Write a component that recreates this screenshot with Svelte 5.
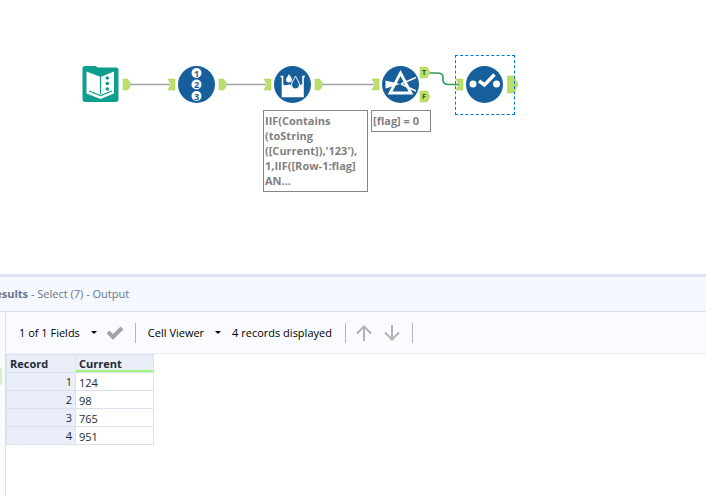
<script lang="ts">
	type Tool = {
		kind: string;
		name: string;
		x: number;
		selected?: boolean;
	};

	// x is the centre of the tool on the canvas
	const tools: Tool[] = [
		{ kind: "input", name: "Text Input", x: 100 },
		{ kind: "record", name: "Record ID", x: 196 },
		{ kind: "formula", name: "Multi-Row Formula", x: 292 },
		{ kind: "filter", name: "Filter", x: 400 },
		{ kind: "select", name: "Select", x: 484, selected: true },
	];

	const wires = [
		{ from: 129, to: 170 },
		{ from: 225, to: 266 },
		{ from: 321, to: 374 },
	];

	const notes = [
		{
			x: 263,
			width: 105,
			text: "IIF(Contains\n(toString\n([Current]),'123'),\n1,IIF([Row-1:flag]\nAN...",
		},
		{ x: 371, width: 60, text: "[flag] = 0" },
	];

	const rows = [124, 98, 765, 951];
</script>

<main>
	<section class="canvas" aria-label="Workflow">
		<svg class="wires" aria-hidden="true">
			{#each wires as wire}
				<path d="M{wire.from} 84.500H{wire.to}" stroke="#a3a3a3" />
			{/each}
			<path d="M429 73H437Q443 73 443 77V80Q443 84.500 449 84.500H459" stroke="#2c9c52" />
		</svg>

		{#each tools as tool}
			<button
				class="tool"
				class:selected={tool.selected}
				aria-label={tool.name}
				style="left: {tool.x - 29}px"
			>
				<svg width="64" height="60" viewBox="-29 -29 64 60">
					{#if tool.kind !== "input"}
						<path class="anchor" d="M-28 -5H-21V6H-28L-25 0.500Z" />
						<circle cx="0.500" cy="0.500" r="18.500" fill="#175f9b" />
					{/if}
					{#if tool.kind === "filter"}
						<path class="anchor" d="M20 -17H27L30 -11.500L27 -6H20Z" />
						<path class="anchor" d="M20 7H27L30 12.500L27 18H20Z" />
						<text class="port" x="24" y="-9">T</text>
						<text class="port" x="24" y="15">F</text>
					{:else if tool.kind === "select"}
						<path class="anchor" d="M23.500 -8H30L34 0.500L30 9H23.500Z" />
					{:else}
						<path class="anchor" d="M23 -5H27.500L30 -2V3L27.500 6H23Z" />
					{/if}

					{#if tool.kind === "input"}
						<path
							d="M-17.500 -15.500Q-17.500 -18 -15 -18H-5Q-3.500 -18 -2.500 -16.500H16Q18.500 -16.500 18.500 -14V15Q18.500 18 15.500 18H-14.500Q-17.500 18 -17.500 15Z"
							fill="#0d9f8c"
						/>
						<path
							d="M-13.500 -12.500L0.500 -7L14 -12.500V9.500L0.500 15L-13.500 9.500Z"
							fill="#fff"
						/>
						<path
							d="M0.500 -7V10M-11 7L0.500 11.500L12 7"
							fill="none"
							stroke="#0d9f8c"
							stroke-width="1.200"
						/>
						<g fill="#0d9f8c">
							<circle cx="7.300" cy="-6" r="1.800" />
							<circle cx="7.300" cy="-0.500" r="1.800" />
							<circle cx="7.300" cy="5" r="1.800" />
						</g>
					{:else if tool.kind === "record"}
						{#each [1, 2, 3] as digit}
							<circle cx="0.500" cy={(digit - 2) * 11.5 + 0.5} r="5" fill="#fff" />
							<text class="digit" x="0.500" y={(digit - 2) * 11.5 + 4}>{digit}</text>
						{/each}
					{:else if tool.kind === "formula"}
						<path
							d="M-11.500 -7.500H-9.500V12.500H11V-7.500H13"
							fill="none"
							stroke="#fff"
							stroke-width="1.600"
						/>
						<path
							d="M-9.500 0Q-7.500 2 -5 1T-1 1L0 3H7L8 1L11 0V12.500H-9.500Z"
							fill="#fff"
						/>
						<path
							d="M-3 -10C-1.500 -7 0 -6 0 -4.500A3 3 0 0 1 -6 -4.500C-6 -6 -4.500 -7 -3 -10Z"
							fill="#fff"
						/>
						<path
							d="M3.500 -8C5 -4 7.500 -2 7.500 1A4 4 0 0 1 -0.500 1C-0.500 -2 2 -4 3.500 -8Z"
							fill="#175f9b"
							stroke="#fff"
							stroke-width="1"
						/>
					{:else if tool.kind === "filter"}
						<path
							d="M0.500 -11L11 9H-10Z"
							fill="none"
							stroke="#fff"
							stroke-width="2.800"
						/>
						<path d="M-14.500 -3.500L0 0L-14.500 4.500Z" fill="#fff" />
						<path
							d="M1 0L16 -6.500M1 0L16 7"
							fill="none"
							stroke="#fff"
							stroke-width="1.400"
						/>
					{:else}
						<circle cx="-11" cy="0" r="3.500" fill="#fff" />
						<circle cx="12.500" cy="0" r="3.500" fill="#fff" />
						<path
							d="M-5 -3L0.500 1L10.500 -9.500"
							fill="none"
							stroke="#fff"
							stroke-width="3.500"
						/>
					{/if}
				</svg>
			</button>
		{/each}

		{#each notes as note}
			<p class="note" style="left: {note.x}px; width: {note.width}px">{note.text}</p>
		{/each}
	</section>

	<section class="results">
		<h2><b>Results</b> - Select (7) - Output</h2>
		<div class="body">
			<div class="rail"><i></i></div>
			<div class="pane">
				<div class="toolbar">
					<button>1 of 1 Fields <span class="caret"></span></button>
					<button class="check" aria-label="Apply">
						<svg width="18" height="14" viewBox="0 0 18 14">
							<path d="M2 6L7 11L16 2" fill="none" stroke="#a3a3a3" stroke-width="4" />
						</svg>
					</button>
					<span class="line"></span>
					<button class="viewer">Cell Viewer <span class="caret"></span></button>
					<span class="count">4 records displayed</span>
					<span class="line"></span>
					<div class="arrows">
						<button aria-label="Previous record">
							<svg width="16" height="16" viewBox="0 0 16 16">
								<path d="M8 16V2M1 8.500L8 1.500L15 8.500" />
							</svg>
						</button>
						<button aria-label="Next record">
							<svg width="16" height="16" viewBox="0 0 16 16">
								<path d="M8 0V14M1 7.500L8 14.500L15 7.500" />
							</svg>
						</button>
					</div>
					<span class="line"></span>
				</div>

				<table>
					<thead>
						<tr>
							<th scope="col">Record</th>
							<th scope="col" class="current">Current</th>
						</tr>
					</thead>
					<tbody>
						{#each rows as value, i}
							<tr>
								<th scope="row">{i + 1}</th>
								<td>{value}</td>
							</tr>
						{/each}
					</tbody>
				</table>
			</div>
		</div>
	</section>
</main>

<style>
	:global(body) {
		margin: 0;
	}

	main {
		display: flex;
		flex-direction: column;
		min-height: 100vh;
		background: #fff;
		color: #000;
		font: 11px/16px "Open Sans", "Noto Sans", sans-serif;
		overflow: hidden;
	}

	button {
		display: flex;
		align-items: center;
		padding: 0;
		border: 0;
		background: none;
		color: inherit;
		font: inherit;
		cursor: pointer;
	}

	/* workflow canvas */
	.canvas {
		position: relative;
		min-height: 274px;
	}

	.wires {
		position: absolute;
		inset: 0;
		width: 100%;
		height: 100%;
	}

	.wires path {
		fill: none;
		stroke-width: 1.6;
	}

	.tool {
		position: absolute;
		top: 55px;
		width: 60px;
		height: 60px;
	}

	.tool svg {
		flex: none;
		overflow: visible;
	}

	.selected {
		outline: 1px dashed #0078d7;
		outline-offset: -1px;
	}

	.anchor {
		fill: #bbdf68;
		stroke: #a5cc55;
		stroke-width: 0.5;
	}

	.port,
	.digit {
		font-weight: 700;
		text-anchor: middle;
	}

	.port {
		font-size: 7px;
		fill: #2d5a3a;
	}

	.digit {
		font-size: 9px;
		fill: #175f9b;
	}

	.note {
		position: absolute;
		top: 110px;
		box-sizing: border-box;
		margin: 0;
		padding: 2px 1px 3px;
		border: 1px solid #858585;
		color: #7f7f7f;
		font-weight: 700;
		line-height: 15px;
		white-space: pre;
	}

	/* results window */
	.results {
		display: flex;
		flex: 1;
		flex-direction: column;
		border-top: 3px solid #dde4f1;
	}

	h2 {
		margin: 0;
		padding: 9px 0;
		border-bottom: 1px solid #d8e2ef;
		background: #f5f8fe;
		color: #65758f;
		font-size: 11px;
		font-weight: 400;
		text-indent: -12px;
		white-space: nowrap;
	}

	.body {
		display: flex;
		flex: 1;
	}

	.rail {
		width: 5px;
		border-right: 1px solid #d9e1f0;
		background: #fafbfe;
	}

	.rail i {
		display: block;
		width: 2px;
		height: 17px;
		margin-top: 56px;
		background: #d9efcc;
	}

	.pane {
		flex: 1;
	}

	.toolbar {
		display: flex;
		align-items: center;
		height: 41px;
		padding-left: 13px;
		border-bottom: 1px solid #eceef2;
		background: #fafbfe;
		white-space: nowrap;
	}

	.caret {
		margin-left: 11px;
		border: 3px solid transparent;
		border-top-color: #000;
		border-bottom: 0;
	}

	.check {
		margin: 0 11px 0 9px;
	}

	.line {
		width: 1px;
		height: 20px;
		background: #b5b5b5;
	}

	.viewer {
		margin-left: 12px;
	}

	.count {
		margin: 0 13px 0 11px;
	}

	.arrows {
		display: flex;
		gap: 12px;
		margin: 0 12px 0 10px;
	}

	.arrows path {
		fill: none;
		stroke: #b3b3b3;
		stroke-width: 2;
	}

	table {
		border-collapse: collapse;
		color: #222a38;
	}

	th,
	td {
		box-sizing: border-box;
		height: 18px;
		padding: 0 3px;
		border: 1px solid #d9e1f0;
		line-height: 16px;
		text-align: left;
	}

	td {
		padding-top: 1px;
		line-height: 15px;
		vertical-align: bottom;
	}

	thead th,
	tbody th {
		width: 69px;
		background: #e9eef9;
	}

	tbody th {
		font-weight: 400;
		text-align: right;
	}

	thead .current {
		width: 78px;
		box-shadow: inset 0 -2px #9bf577;
	}
</style>
